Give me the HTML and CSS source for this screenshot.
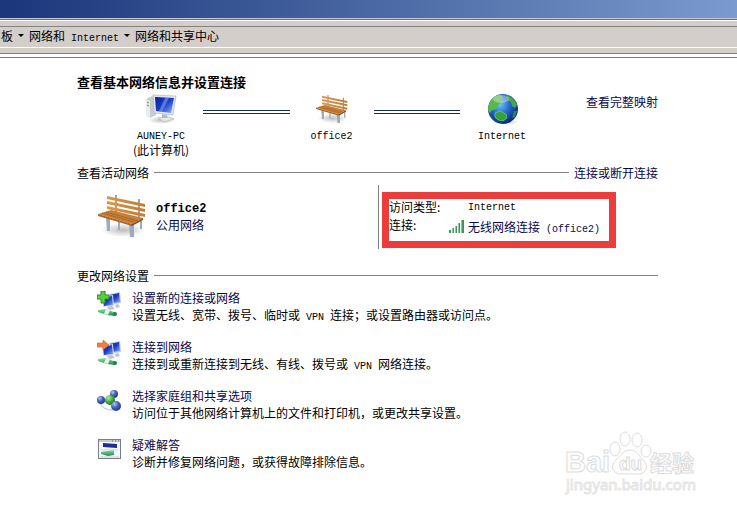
FILE: index.html
```
<!DOCTYPE html>
<html lang="zh-CN">

<head>
    <meta charset="UTF-8">
    <meta name="viewport" content="width=device-width, initial-scale=1.0">
    <title>网络和共享中心</title>
    <link rel="stylesheet" href="styles.css">
</head>

<body>

    <svg class="defs" width="0" height="0" aria-hidden="true">
        <defs>
            <linearGradient id="screen" x1="0" y1="0" x2="1" y2="1">
                <stop offset="0" stop-color="#0a1c9c" />
                <stop offset="0.5" stop-color="#1c3fc4" />
                <stop offset="1" stop-color="#8fb4f4" />
            </linearGradient>
            <linearGradient id="wood" x1="0" y1="0" x2="1" y2="0">
                <stop offset="0" stop-color="#dc9848" />
                <stop offset="1" stop-color="#c07c38" />
            </linearGradient>
            <linearGradient id="pipe" x1="0" y1="0" x2="0" y2="1">
                <stop offset="0" stop-color="#8ee0a0" />
                <stop offset="1" stop-color="#1c8c48" />
            </linearGradient>
            <radialGradient id="sea" cx="0.4" cy="0.35" r="0.65">
                <stop offset="0" stop-color="#6fc4f4" />
                <stop offset="0.5" stop-color="#2468c8" />
                <stop offset="1" stop-color="#0c2c78" />
            </radialGradient>
            <radialGradient id="blue-ball" cx="0.35" cy="0.3" r="0.7">
                <stop offset="0" stop-color="#b4c8f4" />
                <stop offset="0.5" stop-color="#4864bc" />
                <stop offset="1" stop-color="#223a88" />
            </radialGradient>
            <radialGradient id="green-ball" cx="0.35" cy="0.3" r="0.7">
                <stop offset="0" stop-color="#b4f09c" />
                <stop offset="0.6" stop-color="#3ea83c" />
                <stop offset="1" stop-color="#1c7828" />
            </radialGradient>
            <radialGradient id="shade">
                <stop offset="0" stop-color="#909090" stop-opacity="0.6" />
                <stop offset="1" stop-color="#909090" stop-opacity="0" />
            </radialGradient>
        </defs>

        <symbol id="bench" viewBox="0 0 48 44">
            <ellipse cx="25" cy="36" rx="22" ry="7" fill="url(#shade)" />
            <path d="M18 1v18M41 5v20" stroke="#8c8478" stroke-width="1.5" />
            <path d="M9 2l38 8v3l-38-8zM9 7l38 8v3l-38-8zM9 12l38 8v3l-38-8z" fill="url(#wood)" />
            <path d="M8 24l4 1v12h-3zM31 30l5 0v13h-4zM20 27h2v9h-2zM42 27h2v8h-2z" fill="#9cacc0" />
            <path d="M0 20l13-4 32 8-11 6z" fill="#c88038" />
            <path d="M4 19l32 9M8 18l32 9" stroke="#9a5c20" stroke-width="0.7" />
            <path d="M0 20l34 10v2l-34-10z" fill="#a86428" />
            <path d="M34 30l11-6v2l-11 6z" fill="#84501c" />
        </symbol>

        <!-- two screens on a green network cable -->
        <symbol id="screens" viewBox="0 0 25 26">
            <path d="M12 3l11-2 1 11-10 2z" fill="#c4cad8" />
            <path d="M13 4l9-2 1 9-8 1z" fill="url(#screen)" />
            <path d="M5 6l11-2 1 11-11 1z" fill="#d8dce6" />
            <path d="M6 7l9-2 1 9-9 1z" fill="url(#screen)" />
            <path d="M10 16l5-1 3 3-6 1zM18 14l3-1 2 3-4 1z" fill="#bcc2ce" />
            <path d="M1 19l8-1 10 4-1 3-8-1-9-3z" fill="url(#pipe)" />
            <path d="M9 18l4 1-2 5-4-1z" fill="#e4f4e8" />
            <ellipse cx="18" cy="23" rx="2" ry="2" fill="#1c8444" />
        </symbol>
    </svg>

    <div class="titlebar"></div>

    <div class="toolbar">
        <nav class="path" aria-label="地址">
            <a href="#">板</a>
            <span class="arrow"></span>
            <a href="#">网络和<span class="en"> Internet</span></a>
            <span class="arrow"></span>
            <a href="#">网络和共享中心</a>
        </nav>
    </div>
    <div class="toolbar-edge"></div>

    <main class="content">
        <h1>查看基本网络信息并设置连接</h1>

        <div class="overview">
            <div class="map">
                <div class="node">
                    <svg class="node-icon" viewBox="0 0 32 32">
                        <ellipse cx="17" cy="27" rx="14" ry="4" fill="url(#shade)" />
                        <path d="M1 6l6-3 4 2v17l-6 3-4-3z" fill="#c6cccc" />
                        <path d="M1 6l4 2v17l-4-3z" fill="#e8ecea" />
                        <path d="M2 9l2 1M2 12l2 1" stroke="#708078" />
                        <path d="M8 2l23 1-3 19-19-2z" fill="#dfe5ee" stroke="#a8b0bc" stroke-width="0.6" />
                        <path d="M10 4l19 1-3 15-15-2z" fill="url(#screen)" />
                        <path d="M20 5l4 0-7 14-3-1z" fill="#7c9cf0" opacity="0.6" />
                        <path d="M17 21l5 1 1 3-6 0z" fill="#b4bac4" />
                        <path d="M13 25l11-1 5 2-10 3z" fill="#e4e8ee" stroke="#a8acb4" stroke-width="0.6" />
                    </svg>
                    <span class="en">AUNEY-PC</span>
                    <span>(此计算机)</span>
                </div>
                <div class="wire"></div>
                <div class="node">
                    <svg class="node-icon"><use href="#bench" /></svg>
                    <span class="en">office2</span>
                </div>
                <div class="wire"></div>
                <div class="node">
                    <svg class="node-icon" viewBox="0 0 32 32">
                        <ellipse cx="19" cy="29" rx="13" ry="3" fill="url(#shade)" />
                        <circle cx="17" cy="16" r="15" fill="url(#sea)" />
                        <path d="M4 9c3-5 6-7 10-7l3 2-3 3 2 2-4 3-2 4-4 1-2 3-2-3c0-3 1-6 2-8z" fill="#58b848" />
                        <path d="M20 2c5 1 9 5 11 10l-2 3-3-2-1-4-3-1-1-3z" fill="#4aa844" />
                        <path d="M9 20l5-2 6 3 1 4-4 3-5-1-3-3z" fill="#34a040" stroke="#8cdc70" stroke-width="0.6" />
                        <path d="M28 18l3 0-2 6-3 1z" fill="#2c8c48" />
                        <ellipse cx="15" cy="6" rx="8" ry="4" fill="#fff" opacity="0.35" />
                    </svg>
                    <span class="en">Internet</span>
                </div>
            </div>
            <a class="map-link" href="#">查看完整映射</a>
        </div>

        <section>
            <div class="section-head">
                <h2>查看活动网络</h2>
                <span class="rule"></span>
                <a href="#">连接或断开连接</a>
            </div>

            <div class="active-network">
                <div class="network">
                    <svg class="network-icon"><use href="#bench" /></svg>
                    <div>
                        <strong class="en">office2</strong>
                        <a href="#">公用网络</a>
                    </div>
                </div>
                <div class="details">
                    <dl class="marked">
                        <dt>访问类型:</dt>
                        <dd class="en">Internet</dd>
                        <dt>连接:</dt>
                        <dd>
                            <svg class="signal" viewBox="0 0 15 14">
                                <path d="M0 11h2v3h-2zM3 9h2v5h-2zM6 7h2v7h-2zM9 4h2v10h-2zM12 1h3v13h-3z" fill="#3c9858" />
                                <path d="M3 9h1v5h-1zM6 7h1v7h-1zM9 4h1v10h-1zM12 1h1v13h-1z" fill="#8cc89c" />
                            </svg>
                            <a href="#">无线网络连接<span class="en"> (office2)</span></a>
                        </dd>
                    </dl>
                </div>
            </div>
        </section>

        <section class="settings">
            <div class="section-head">
                <h2>更改网络设置</h2>
                <span class="rule"></span>
            </div>

            <ul class="tasks">
                <li>
                    <svg class="task-icon" viewBox="0 0 25 26">
                        <use href="#screens" />
                        <path d="M4 0h4v4h4v4h-4v4h-4v-4h-4v-4h4z" fill="#5cd03c" stroke="#248c20" />
                    </svg>
                    <div>
                        <a href="#">设置新的连接或网络</a>
                        <p>设置无线、宽带、拨号、临时或<span class="en"> VPN </span>连接；或设置路由器或访问点。</p>
                    </div>
                </li>
                <li>
                    <svg class="task-icon" viewBox="0 0 25 26">
                        <use href="#screens" />
                        <path d="M0 3h6v-3l6 5-6 5v-3h-6z" fill="#f08040" stroke="#d06028" stroke-width="0.6" />
                    </svg>
                    <div>
                        <a href="#">连接到网络</a>
                        <p>连接到或重新连接到无线、有线、拨号或<span class="en"> VPN </span>网络连接。</p>
                    </div>
                </li>
                <li>
                    <svg class="task-icon" viewBox="0 0 25 26">
                        <path d="M5 12l9-1 3-5M14 11l5 8" fill="none" stroke="#7cb8c8" stroke-width="3" />
                        <path d="M3 14c3 6 9 8 16 6" fill="none" stroke="#b8d8e4" stroke-width="1.5" />
                        <circle cx="17" cy="5" r="4" fill="url(#blue-ball)" />
                        <circle cx="4" cy="11" r="4" fill="url(#blue-ball)" />
                        <circle cx="13" cy="11" r="5" fill="url(#green-ball)" />
                        <circle cx="19" cy="17" r="5" fill="url(#blue-ball)" />
                    </svg>
                    <div>
                        <a href="#">选择家庭组和共享选项</a>
                        <p>访问位于其他网络计算机上的文件和打印机，或更改共享设置。</p>
                    </div>
                </li>
                <li>
                    <svg class="task-icon" viewBox="0 0 25 26">
                        <rect x="1.5" y="1.5" width="22" height="19" fill="#f4f6fa" stroke="#787c84" />
                        <path d="M2 3h21" stroke="#c8ccd4" stroke-width="2" />
                        <path d="M15 3h1M18 3h1M21 3h1" stroke="#606878" />
                        <path d="M6 5l14 1v4l-14-1z" fill="#1c2c98" />
                        <path d="M3 12h18" stroke="#c4d8f0" />
                        <path d="M4 14l6-1 7-1v5l-6 1-7-2z" fill="url(#pipe)" />
                        <path d="M3 19h19" stroke="#c8ccd4" />
                    </svg>
                    <div>
                        <a href="#">疑难解答</a>
                        <p>诊断并修复网络问题，或获得故障排除信息。</p>
                    </div>
                </li>
            </ul>
        </section>
    </main>

    <svg class="watermark" viewBox="0 0 136 64">
        <g fill="#fff" stroke="#dcdcdc">
            <ellipse cx="51" cy="18" rx="5" ry="7" />
            <ellipse cx="61" cy="8" rx="5" ry="7" />
            <ellipse cx="73" cy="9" rx="5" ry="7" />
            <ellipse cx="82" cy="20" rx="5" ry="6" />
            <path d="M66 19c7 0 9 6 13 10 5 4 5 13-4 14-6 0-13 0-19 0-9-1-9-10-4-14 5-4 7-10 14-10z" />
            <text class="wm-brand" x="1" y="41">Bai</text>
            <text class="wm-paw" x="55" y="39">du</text>
            <text class="wm-cn" x="86" y="40">经验</text>
            <text class="wm-site" x="2" y="59">jingyan.baidu.com</text>
        </g>
    </svg>

</body>

</html>
```

FILE: styles.css
```
* {
    box-sizing: border-box;
}

body {
    position: relative;
    min-height: 100vh;
    margin: 0;
    background-color: #fff;
    color: #000;
    font-family: "Noto Sans CJK SC", sans-serif;
    font-size: 12px;
    line-height: 17px;
}

h1,
h2,
p,
ul,
dl,
dd {
    margin: 0;
    padding: 0;
}

a {
    color: #08084c;
    text-decoration: none;
}

a:hover {
    text-decoration: underline;
}

.defs {
    position: absolute;
}

.en {
    font-family: "Liberation Mono", monospace;
    font-size: 10px;
    line-height: 10px;
}

.titlebar {
    height: 19px;
    background: linear-gradient(to right, #1b367a, #3b5896 35%, #5877b0 65%, #7b9ace);
    border-bottom: 1px solid #c4c8d0;
}

.toolbar {
    height: 29px;
    padding-top: 6px;
    background-color: #d4cecb;
    border-top: 1px solid #6c7078;
    border-bottom: 1px solid #fff;
    box-shadow: inset 0 1px #fff;
}

.path {
    display: flex;
    align-items: center;
    gap: 5px;
    height: 18px;
    padding-left: 1px;
    border-top: 1px solid #86827e;
}

.path a {
    color: #000;
    line-height: 17px;
}

.arrow {
    border: 3px solid transparent;
    border-top-color: #000;
    border-bottom: 0;
}

.toolbar-edge {
    height: 10px;
    background: linear-gradient(#d4d0c8 5px, #84827c 5px, #84827c 6px, #fff 6px, #fff 9px, #7c7a76 9px);
}

.content {
    padding: 16px 79px 32px 77px;
}

h1 {
    font-size: 13px;
    font-weight: bold;
    line-height: 16px;
}

h2 {
    font-size: 12px;
    font-weight: normal;
}

.overview {
    display: flex;
    gap: 42px;
    padding: 3px 0 0 42px;
}

.map {
    display: flex;
    flex: 1;
}

.node {
    display: flex;
    flex: 0 0 84px;
    flex-direction: column;
    align-items: center;
    line-height: 13px;
}

.node-icon {
    width: 32px;
    height: 32px;
    margin-bottom: 5px;
}

.node .en {
    line-height: 13px;
}

.wire {
    flex: 1;
    height: 4px;
    margin-top: 17px;
    border-top: 1px solid #10304c;
    border-bottom: 1px solid #10304c;
}

.section-head {
    display: flex;
    align-items: center;
    gap: 5px;
}

.overview + section {
    margin-top: 8px;
}

.rule {
    flex: 1;
    height: 1px;
    background-color: #808080;
}

.active-network {
    display: grid;
    grid-template-columns: 301fr 280fr;
    margin-top: 4px;
}

.network {
    display: flex;
    gap: 10px;
    padding: 9px 0 0 21px;
    line-height: 15px;
}

.network div {
    padding-top: 8px;
}

.network strong,
.network a {
    display: block;
}

.network strong {
    font-size: 12px;
    line-height: 15px;
}

.network-icon {
    width: 48px;
    height: 44px;
}

.details {
    padding: 7px 42px 1px 3px;
    border-left: 1px solid #808080;
}

.marked {
    display: grid;
    grid-template-columns: 60px 1fr;
    grid-auto-rows: 18px;
    padding-bottom: 6px;
    border: 7px solid #ec3c3c;
    line-height: 17px;
    white-space: nowrap;
}

.marked dt {
    line-height: 15px;
}

.marked dd {
    display: flex;
    align-items: center;
    gap: 4px;
}

.marked dd.en {
    padding-left: 19px;
}

.signal {
    flex: none;
    width: 15px;
    height: 14px;
}

.settings {
    margin-top: 18px;
}

.tasks {
    display: flex;
    flex-direction: column;
    gap: 15px;
    margin-top: 5px;
    padding-left: 20px;
    list-style: none;
}

.tasks li {
    display: flex;
    gap: 10px;
}

.task-icon {
    flex: none;
    width: 25px;
    height: 26px;
    margin-top: 2px;
}

.watermark {
    position: absolute;
    right: 37px;
    bottom: 17px;
    width: 136px;
    height: 64px;
}

.watermark text {
    font-family: "Liberation Sans", sans-serif;
}

.watermark .wm-brand {
    font-size: 29px;
    font-weight: bold;
}

.watermark .wm-paw {
    font-size: 19px;
    font-weight: bold;
}

.watermark .wm-cn {
    font-family: "Noto Sans CJK SC", sans-serif;
    font-size: 22px;
    font-weight: bold;
}

.watermark .wm-site {
    font-family: "Noto Sans", sans-serif;
    font-size: 15px;
    stroke: #e4e4e4;
}
```
